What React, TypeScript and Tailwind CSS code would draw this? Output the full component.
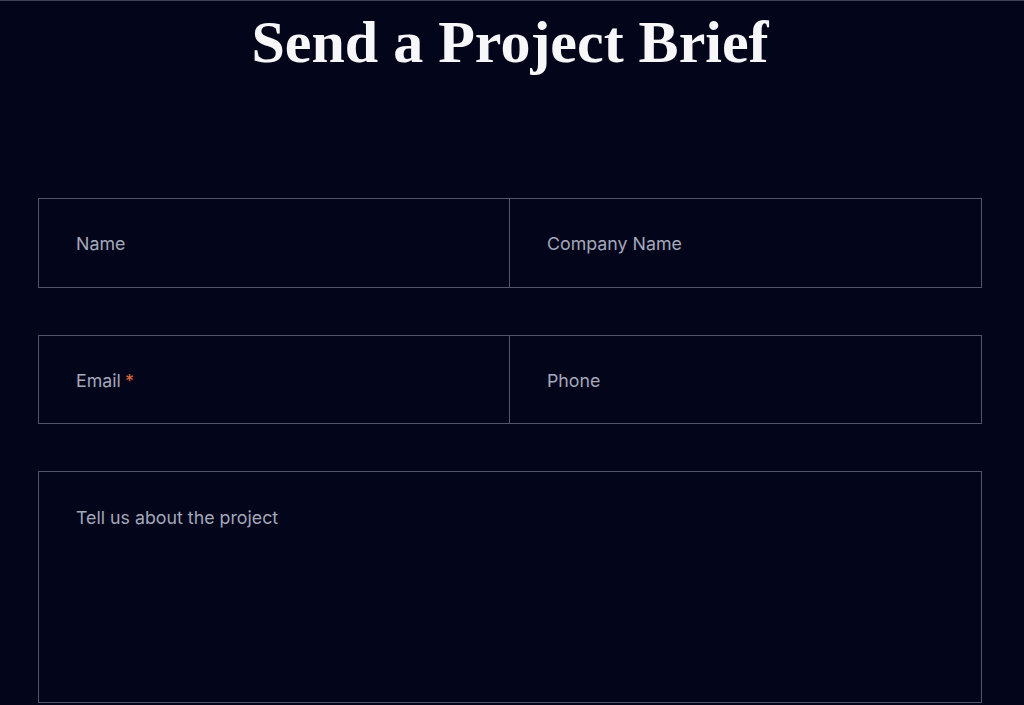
export default function App() {
  const label = "text-[17.8px] text-[#a3a8ba] font-['Inter',sans-serif]";
  return (
    <div className="min-h-[705px] w-[1024px] bg-[#03061a] border-t border-[#3d4258] overflow-hidden">
      <h1 className="text-center text-[60px] leading-none font-bold text-[#f7f7f9] font-['Liberation_Serif',serif] pt-[11px] pr-[4px]">
        Send a Project Brief
      </h1>

      <div className="ml-[38px] w-[944px] mt-[126px] flex flex-col gap-[47px]">
        <div className="grid grid-cols-2 border border-[#50556b] h-[90px]">
          <div className="flex items-center pl-[37px] pt-[3px] border-r border-[#50556b]">
            <span className={label}>Name</span>
          </div>
          <div className="flex items-center pl-[37px] pt-[3px]">
            <span className={label}>Company Name</span>
          </div>
        </div>

        <div className="grid grid-cols-2 border border-[#50556b] h-[89px]">
          <div className="flex items-center pl-[37px] pt-[3px] border-r border-[#50556b]">
            <span className={label}>
              Email<span className="ml-[4px] text-[#e0683c]">*</span>
            </span>
          </div>
          <div className="flex items-center pl-[37px] pt-[3px]">
            <span className={label}>Phone</span>
          </div>
        </div>

        <div className="border border-[#50556b] h-[232px] pl-[37px] pt-[33px]">
          <span className={label}>Tell us about the project</span>
        </div>
      </div>
    </div>
  );
}
